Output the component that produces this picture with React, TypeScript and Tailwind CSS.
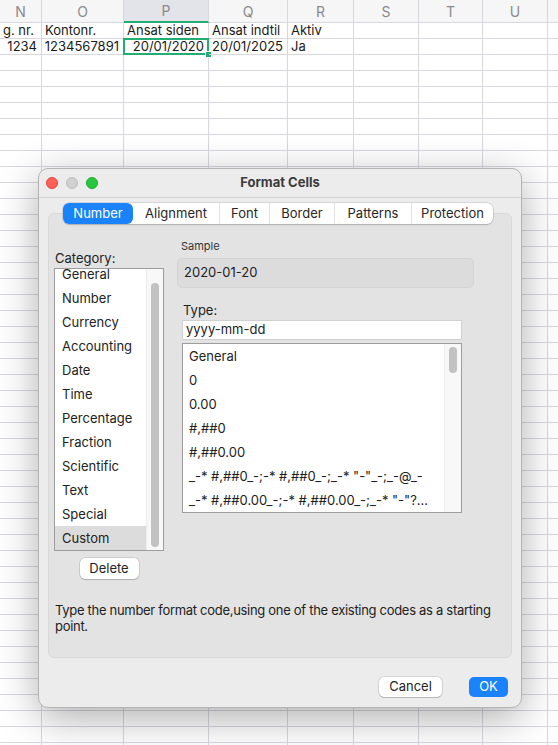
import React from 'react';

const columns = [
  { label: 'N', w: 42 },
  { label: 'O', w: 82 },
  { label: 'P', w: 85 },
  { label: 'Q', w: 79 },
  { label: 'R', w: 66 },
  { label: 'S', w: 65 },
  { label: 'T', w: 64 },
  { label: 'U', w: 65 },
  { label: '', w: 80 },
];

const headerRow = ['g. nr.', 'Kontonr.', 'Ansat siden', 'Ansat indtil', 'Aktiv', '', '', '', ''];
const dataRow = ['1234', '1234567891', '20/01/2020', '20/01/2025', 'Ja', '', '', '', ''];

const categories = [
  'General',
  'Number',
  'Currency',
  'Accounting',
  'Date',
  'Time',
  'Percentage',
  'Fraction',
  'Scientific',
  'Text',
  'Special',
  'Custom',
];

const formats = [
  'General',
  '0',
  '0.00',
  '#,##0',
  '#,##0.00',
  '_-* #,##0_-;-* #,##0_-;_-* "-"_-;_-@_-',
  '_-* #,##0.00_-;-* #,##0.00_-;_-* "-"?...',
];

const tabs = [
  { name: 'Number', w: 70 },
  { name: 'Alignment', w: 86 },
  { name: 'Font', w: 50 },
  { name: 'Border', w: 65 },
  { name: 'Patterns', w: 77 },
  { name: 'Protection', w: 82 },
];

const Sheet = () => {
  const emptyRows = Array.from({ length: 44 });
  return (
    <div className="w-[558px] overflow-hidden bg-white">
      {/* column header */}
      <div className="flex h-[23px] bg-[#f6f6f7]">
        {columns.map((c, i) => (
          <div
            key={i}
            style={{ width: c.w }}
            className={`shrink-0 flex items-center justify-center border-r border-[#d6d8de] text-[14px] text-[#8a8a8e] ${
              c.label === 'P' ? 'bg-[#e3e4e9] border-b-2 border-b-[#22ad72]' : 'border-b border-b-[#d6d8de]'
            }`}
          >
            {c.label}
          </div>
        ))}
      </div>
      {/* row 1 */}
      <div className="flex h-[16px]">
        {columns.map((c, i) => (
          <div
            key={i}
            style={{ width: c.w }}
            className="shrink-0 border-r border-b border-[#d6d8de] pl-[3px] text-[13px] leading-[15px] text-[#1a1a1a] whitespace-nowrap overflow-hidden"
          >
            {headerRow[i]}
          </div>
        ))}
      </div>
      {/* row 2 */}
      <div className="flex h-[16px]">
        {columns.map((c, i) => (
          <div
            key={i}
            style={{ width: c.w }}
            className={`relative shrink-0 border-r border-b border-[#d6d8de] text-[13px] leading-[15px] text-[#1a1a1a] whitespace-nowrap ${
              i === 4 ? 'pl-[3px] text-left' : 'pr-[4px] text-right'
            }`}
          >
            {dataRow[i]}
            {i === 2 && (
              <>
                <div className="absolute -left-[1px] -top-[1px] -right-[1px] -bottom-[1px] border-2 border-[#22ad72]" />
                <div className="absolute -right-[4px] -bottom-[4px] w-[7px] h-[7px] bg-[#22ad72] border border-white" />
              </>
            )}
          </div>
        ))}
      </div>
      {emptyRows.map((_, r) => (
        <div key={r} className="flex h-[16px]">
          {columns.map((c, i) => (
            <div key={i} style={{ width: c.w }} className="shrink-0 border-r border-b border-[#d6d8de]" />
          ))}
        </div>
      ))}
    </div>
  );
};

const FormatCellsDialog = () => (
  <div className="absolute left-[38px] top-[168px] w-[484px] h-[540px] rounded-[10px] bg-[#ececec] border border-[#b4b4b4] shadow-[0_10px_40px_rgba(0,0,0,0.32)] flex flex-col text-[13px] text-[#222]">
    {/* title bar */}
    <div className="h-[29px] shrink-0 flex items-center border-b border-[#d4d4d4]">
      <div className="w-[68px] flex items-center gap-[8px] pl-[7px]">
        <span className="w-[12px] h-[12px] rounded-full bg-[#fe5f57] border border-[#e0443e]" />
        <span className="w-[12px] h-[12px] rounded-full bg-[#d0d0d0] border border-[#bcbcbc]" />
        <span className="w-[12px] h-[12px] rounded-full bg-[#29c740] border border-[#1aab29]" />
      </div>
      <div className="flex-1 text-center font-bold text-[13px] text-[#3b3b3b]">Format Cells</div>
      <div className="w-[68px]" />
    </div>

    <div className="px-[9px] flex flex-col">
      {/* tabs */}
      <div className="relative z-10 mt-[5px] ml-[15px] flex h-[21px] w-[430px] rounded-[6px] bg-white shadow-[0_0_0_0.5px_rgba(0,0,0,0.18),0_1px_1.5px_rgba(0,0,0,0.15)]">
        {tabs.map((t, i) => (
          <div
            key={t.name}
            style={{ width: t.w }}
            className={`flex items-center justify-center text-[13px] ${
              i === 0
                ? 'bg-[#1a82fb] text-white rounded-[6px]'
                : `text-[#262626] ${i > 1 ? 'border-l border-[#e2e2e2]' : ''}`
            }`}
          >
            {t.name}
          </div>
        ))}
      </div>

      {/* content box */}
      <div className="-mt-[11px] h-[445px] rounded-[6px] bg-[#e3e3e3] border border-[#d9d9d9] pt-[25px] pl-[5px] pr-[4px] flex flex-col">
        <div className="flex items-start gap-[13px]">
          {/* category column */}
          <div className="w-[110px] mt-[11px] flex flex-col items-center">
            <div className="self-start pl-[1px] h-[16px] leading-[16px]">Category:</div>
            <div className="mt-[2px] w-[110px] h-[283px] border border-[#9d9d9d] bg-white flex overflow-hidden">
              <div className="flex-1 overflow-hidden">
                <div className="-mt-[7px]">
                  {categories.map((c) => (
                    <div
                      key={c}
                      className={`h-[24px] leading-[24px] pl-[7px] ${c === 'Custom' ? 'bg-[#dcdcdc]' : ''}`}
                    >
                      {c}
                    </div>
                  ))}
                </div>
              </div>
              <div className="w-[17px] bg-[#f8f8f8] border-l border-[#ececec] flex justify-center pt-[14px] pb-[3px]">
                <div className="w-[8px] h-full rounded-full bg-[#c2c2c2]" />
              </div>
            </div>
            <div className="mt-[7px] w-[59px] h-[21px] rounded-[5px] bg-white shadow-[0_0_0_0.5px_rgba(0,0,0,0.2),0_1px_1px_rgba(0,0,0,0.15)] flex items-center justify-center">
              Delete
            </div>
          </div>

          {/* sample + type column */}
          <div className="w-[297px] flex flex-col">
            <div className="pl-[4px] text-[11px] leading-[14px] text-[#333]">Sample</div>
            <div className="mt-[5px] h-[30px] rounded-[5px] bg-[#dcdcdc] border border-[#d3d3d3] flex items-center pl-[6px]">
              2020-01-20
            </div>
            <div className="mt-[14px] pl-[6px] h-[16px] leading-[16px]">Type:</div>
            <div className="mt-[2px] ml-[5px] w-[280px] h-[20px] bg-white border border-[#d0d0d0] pl-[3px] flex items-center">
              yyyy-mm-dd
            </div>
            <div className="mt-[3px] ml-[5px] w-[280px] h-[170px] bg-white border border-[#9d9d9d] flex overflow-hidden">
              <div className="flex-1 overflow-hidden">
                {formats.map((f) => (
                  <div key={f} className="h-[24px] leading-[24px] pl-[6px] whitespace-nowrap">
                    {f}
                  </div>
                ))}
              </div>
              <div className="w-[17px] bg-[#f8f8f8] border-l border-[#ececec] flex justify-center pt-[3px]">
                <div className="w-[8px] h-[26px] rounded-full bg-[#c2c2c2]" />
              </div>
            </div>
          </div>
        </div>

        <p className="mt-[23px] pl-[1px] leading-[16px] text-[13px] tracking-[-0.3px] text-[#222]">
          Type the number format code,using one of the existing codes as a starting point.
        </p>
      </div>
    </div>

    {/* buttons */}
    <div className="mt-[19px] pr-[13px] flex justify-end gap-[27px]">
      <div className="w-[63px] h-[20px] rounded-[5px] bg-white shadow-[0_0_0_0.5px_rgba(0,0,0,0.2),0_1px_1px_rgba(0,0,0,0.15)] flex items-center justify-center">
        Cancel
      </div>
      <div className="w-[39px] h-[20px] rounded-[5px] bg-[#1a82fb] text-white flex items-center justify-center">
        OK
      </div>
    </div>
  </div>
);

export default function App() {
  return (
    <div className="relative w-[558px] h-[745px] overflow-hidden bg-white font-['Inter','Liberation_Sans',sans-serif]">
      <Sheet />
      <FormatCellsDialog />
    </div>
  );
}
